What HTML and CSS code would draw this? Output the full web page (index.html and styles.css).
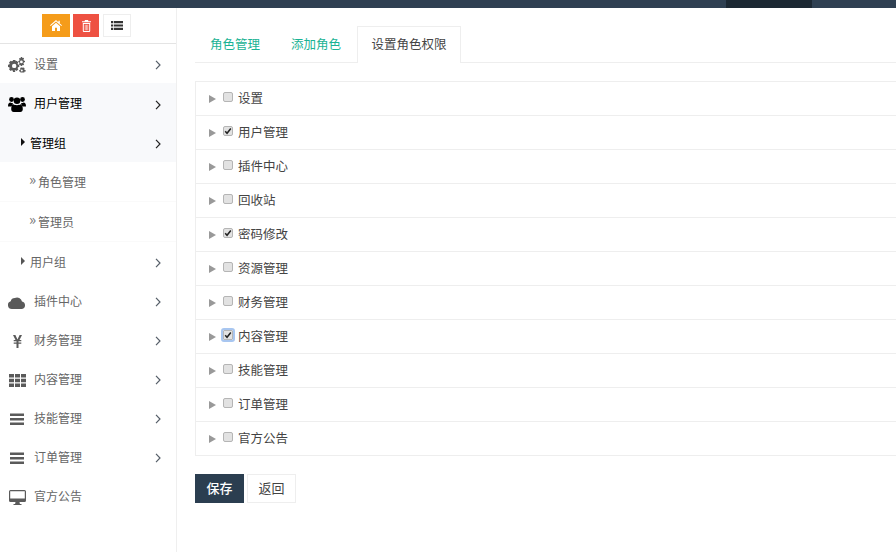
FILE: index.html
```html
<!DOCTYPE html>
<html lang="zh-CN">
<head>
<meta charset="utf-8">
<title>设置角色权限</title>
<link rel="stylesheet" href="styles.css">
</head>
<body>
<svg class="defs" width="0" height="0" aria-hidden="true">
  <symbol id="chev" viewBox="0 0 6 10"><path d="M1 .8 5 5 1 9.2" fill="none" stroke="currentColor" stroke-width="1.2"/></symbol>
  <symbol id="bars" viewBox="0 0 16 16"><path d="M1 2.500h14v2.400H1zM1 7h14v2.400H1zM1 11.500h14v2.400H1z" fill="currentColor"/></symbol>
</svg>
<header class="topbar"><div class="topbar-active"></div></header>
<div class="layout">
  <aside class="sidebar">
    <div class="toolbar">
      <a class="tool tool-home"><svg width="12" height="11" viewBox="0 0 12 11"><path d="M6 0 0 5.300l.7.700L6 1.400 11.300 6l.7-.7L9.800 3.400V.8H8.400v1.400zM2 6.300V11h3V7.700h2V11h3V6.300L6 2.800z" fill="#fff"/></svg></a>
      <a class="tool tool-trash"><svg width="9" height="12" viewBox="0 0 9 12"><path fill="#fff" fill-rule="evenodd" d="M3 0h3l.5 1.300H9v1H0v-1h2.500zM.8 3h7.400v8a1 1 0 0 1-1 1H1.800a1 1 0 0 1-1-1zm1 .9V11h5.400V3.900z"/><path fill="#fbd0cb" d="M2.800 4.800h.8v5.400h-.8zM4.100 4.800h.8v5.400h-.8zM5.400 4.800h.8v5.400h-.8z"/></svg></a>
      <a class="tool tool-list"><svg width="12" height="9" viewBox="0 0 12 9"><path d="M0 0h2.300v2.200H0zM3 0h9v2.200H3zM0 3.400h2.300v2.200H0zM3 3.400h9v2.200H3zM0 6.800h2.300V9H0zM3 6.800h9V9H3z" fill="#333"/></svg></a>
    </div>
    <nav class="menu">
      <a class="item"><span class="ico"><svg width="18" height="16" viewBox="0 0 18 16"><path fill="currentColor" fill-rule="evenodd" d="M5 3h2.400l.3 1.300 1-.5L10.400 5.500l-.8.900.4 1 1.300.3V10l-1.300.3-.4 1 .8.900-1.700 1.700-1-.7-1 .4L7.400 15H5l-.3-1.400-1-.4-1 .7L1 12.200l.7-.9-.4-1L0 10V7.700l1.300-.3.400-1-.7-.9 1.700-1.700 1 .5 1-.4zM6.200 6.700a2.200 2.200 0 1 0 0 4.400 2.200 2.200 0 0 0 0-4.400z"/><path fill="currentColor" fill-rule="evenodd" d="M14 0l.5 1 1-.200.6 1-.7.800.4 1 1.200.3v1.200l-1.200.3-.4 1 .7.800-.6 1-1-.2-.5 1h-1.200l-.4-1-1-.1-.4-.900.600-.800-.4-1-.9-.3V4l1-.2.300-1-.6-.9.500-.900 1 .2.400-1.200zM13.400 3.500a1.400 1.400 0 1 0 0 2.800 1.400 1.400 0 0 0 0-2.800z"/><path fill="currentColor" fill-rule="evenodd" d="M14 10.500l1 .3.900-.3.700.900-.4.900.6.800.9.200v1.100l-1 .2-.5.900H12.500l-.4-.9-1-.2v-1.100l.9-.2.500-.800-.4-.900.700-.900zM13.800 12.500a1 1 0 1 0 0 2 1 1 0 0 0 0-2z"/></svg></span><span class="label">设置</span><svg class="chev"><use href="#chev"/></svg></a>
      <a class="item open"><span class="ico"><svg width="18" height="15" viewBox="0 0 18 15"><g fill="currentColor"><circle cx="3.500" cy="2.500" r="2.400"/><circle cx="14.500" cy="2.500" r="2.400"/><circle cx="9" cy="3.800" r="3.300"/><path d="M0 9.500C0 6.500.8 5.500 2.500 5.500c.8.500 1.500.6 2.400.4-.3.800-.4 1.500-.4 2.400-.6.400-1 .7-1.300 1.200zM18 9.500c0-3-.8-4-2.500-4-.8.500-1.500.6-2.400.4.300.8.400 1.500.4 2.400.6.400 1 .7 1.300 1.200zM5.500 7.300c1.200 1.200 5.800 1.200 7 0 1.700.3 2.300 2.400 2.300 5 0 1.600-1 2.700-2.500 2.700H5.700c-1.500 0-2.500-1.100-2.500-2.700 0-2.600.6-4.700 2.300-5z"/></g></svg></span><span class="label">用户管理</span><svg class="chev"><use href="#chev"/></svg></a>
      <a class="sub open"><i class="caret"></i><span>管理组</span><svg class="chev"><use href="#chev"/></svg></a>
      <a class="leaf"><span class="dbl">»</span><span>角色管理</span></a>
      <a class="leaf"><span class="dbl">»</span><span>管理员</span></a>
      <a class="sub"><i class="caret"></i><span>用户组</span><svg class="chev"><use href="#chev"/></svg></a>
      <a class="item"><span class="ico"><svg width="18" height="13" viewBox="0 0 18 13"><path fill="currentColor" d="M4 13a4 4 0 0 1-1.300-7.800A4.300 4.300 0 0 1 6.800 2 5 5 0 0 1 14 5.400 3.900 3.900 0 0 1 14 13z"/></svg></span><span class="label">插件中心</span><svg class="chev"><use href="#chev"/></svg></a>
      <a class="item"><span class="ico"><svg width="9" height="13" viewBox="0 0 9 13"><path fill="currentColor" d="M0 0h2.400l2.100 4.500L6.600 0H9L6.500 5H8.300v1.300H5.500v1.100h2.800v1.300H5.500V13h-2V8.700H.7V7.400h2.800V6.300H.7V5h1.800z"/></svg></span><span class="label">财务管理</span><svg class="chev"><use href="#chev"/></svg></a>
      <a class="item"><span class="ico"><svg width="17" height="13" viewBox="0 0 17 13"><path fill="currentColor" d="M0 0h5v3.600H0zM6 0h5v3.600H6zM12 0h5v3.600h-5zM0 4.700h5v3.600H0zM6 4.700h5v3.600H6zM12 4.700h5v3.600h-5zM0 9.400h5V13H0zM6 9.400h5V13H6zM12 9.400h5V13h-5z"/></svg></span><span class="label">内容管理</span><svg class="chev"><use href="#chev"/></svg></a>
      <a class="item"><span class="ico"><svg class="bars"><use href="#bars"/></svg></span><span class="label">技能管理</span><svg class="chev"><use href="#chev"/></svg></a>
      <a class="item"><span class="ico"><svg class="bars"><use href="#bars"/></svg></span><span class="label">订单管理</span><svg class="chev"><use href="#chev"/></svg></a>
      <a class="item"><span class="ico"><svg width="17" height="15" viewBox="0 0 17 15"><path fill="currentColor" fill-rule="evenodd" d="M1.500 0h14A1.500 1.500 0 0 1 17 1.500v9a1.500 1.500 0 0 1-1.500 1.500H10.500l.4 2H12.500v1H4.500v-1h1.600l.4-2h-5A1.500 1.500 0 0 1 0 10.500v-9A1.500 1.500 0 0 1 1.500 0zM1.200 1.200v7.300h14.600V1.200z"/></svg></span><span class="label">官方公告</span></a>
    </nav>
  </aside>
  <main class="main">
    <ul class="tabs">
      <li class="tab">角色管理</li>
      <li class="tab">添加角色</li>
      <li class="tab active">设置角色权限</li>
    </ul>
    <ul class="tree">
      <li class="node"><i class="arrow"></i><span class="check"></span><span>设置</span></li>
      <li class="node"><i class="arrow"></i><span class="check on"><svg viewBox="0 0 10 10"><path d="M1.500 5.200 3.800 7.800 8.500 1.800" fill="none" stroke="#222" stroke-width="1.900"/></svg></span><span>用户管理</span></li>
      <li class="node"><i class="arrow"></i><span class="check"></span><span>插件中心</span></li>
      <li class="node"><i class="arrow"></i><span class="check"></span><span>回收站</span></li>
      <li class="node"><i class="arrow"></i><span class="check on"><svg viewBox="0 0 10 10"><path d="M1.500 5.200 3.800 7.800 8.500 1.800" fill="none" stroke="#222" stroke-width="1.900"/></svg></span><span>密码修改</span></li>
      <li class="node"><i class="arrow"></i><span class="check"></span><span>资源管理</span></li>
      <li class="node"><i class="arrow"></i><span class="check"></span><span>财务管理</span></li>
      <li class="node"><i class="arrow"></i><span class="check on focus"><svg viewBox="0 0 10 10"><path d="M1.500 5.200 3.800 7.800 8.500 1.800" fill="none" stroke="#222" stroke-width="1.900"/></svg></span><span>内容管理</span></li>
      <li class="node"><i class="arrow"></i><span class="check"></span><span>技能管理</span></li>
      <li class="node"><i class="arrow"></i><span class="check"></span><span>订单管理</span></li>
      <li class="node"><i class="arrow"></i><span class="check"></span><span>官方公告</span></li>
    </ul>
    <div class="actions">
      <button class="btn btn-primary">保存</button>
      <button class="btn">返回</button>
    </div>
  </main>
</div>
</body>
</html>
```
FILE: styles.css
```css
* { box-sizing: border-box; }
html, body { margin: 0; height: 100%; overflow: hidden; }
body {
  background: #fff;
  color: #333;
  font-family: "Noto Sans CJK SC", "Liberation Sans", sans-serif;
  font-size: 13px;
  display: flex;
  flex-direction: column;
}
.defs { position: absolute; }
ul { list-style: none; margin: 0; padding: 0; }

.topbar { height: 8px; flex: none; background: #2f4052; padding-left: 726px; }
.topbar-active { width: 86px; height: 8px; background: #1c2833; }

.layout { flex: 1; display: flex; min-height: 0; }

.sidebar { width: 177px; flex: none; border-right: 1px solid #efefef; }
.toolbar {
  height: 36px;
  border-bottom: 1px solid #e4e4e4;
  padding: 6px 0 0 42px;
  display: flex;
  align-items: flex-start;
  gap: 3px;
}
.tool { height: 23px; display: flex; align-items: center; justify-content: center; }
.tool-home { width: 28px; background: #f59c1a; }
.tool-trash { width: 26px; background: #ee5142; }
.tool-list { width: 28px; margin-left: 1px; background: #fff; border: 1px solid #eee; }

.item, .sub, .leaf { display: flex; align-items: center; font-size: 12px; color: #666; padding-bottom: 1px; }
.item { height: 39px; padding-left: 8px; }
.item .label { margin-left: 8px; }
.ico { width: 18px; margin-top: 4px; display: flex; justify-content: center; align-items: center; color: #5a5a5a; }
.bars { width: 16px; height: 16px; }
.chev { width: 6px; height: 10px; margin: 4px 15px 0 auto; color: #555e68; }
.item.open { height: 40px; }
.item.open, .sub.open { background: #f8f9fb; color: #000; }
.item.open .ico { color: #000; }
.item.open .chev, .sub.open .chev { color: #222; }

.sub { height: 39px; padding-left: 21px; }
.caret {
  width: 0; height: 0; margin-right: 5px;
  border-left: 4px solid #555;
  border-top: 4px solid transparent;
  border-bottom: 4px solid transparent;
}
.sub.open .caret { border-left-color: #111; }
.leaf { height: 40px; padding-left: 29px; border-bottom: 1px solid #fafafa; }
.dbl { width: 9px; font-size: 15px; line-height: 10px; margin-top: -4px; color: #777; }

.main { flex: 1; min-width: 0; padding: 18px 0 0 18px; }

.tabs { display: flex; height: 37px; border-bottom: 1px solid #eee; gap: 1px; font-size: 12.5px; }
.tab {
  height: 37px;
  padding: 0 14px;
  line-height: 34px;
  color: #1ab394;
  border: 1px solid transparent;
  border-bottom: none;
}
.tab.active { color: #444; background: #fff; border-color: #eee; padding: 0 13.5px; }

.tree { margin-top: 18px; border: 1px solid #eee; border-right: none; font-size: 12.5px; }
.node {
  height: 34px;
  display: flex;
  align-items: center;
  padding: 0 0 3px 13px;
  border-bottom: 1px solid #eee;
  color: #444;
}
.node:last-child { border-bottom: none; height: 33px; }
.arrow {
  width: 0; height: 0; margin: 3px 7px 0 0;
  border-left: 7px solid #999;
  border-top: 4px solid transparent;
  border-bottom: 4px solid transparent;
}
.check {
  width: 10px; height: 10px; margin: 0 5px 0 0;
  background: #e2e2e2;
  border: 1px solid #b5b5b5;
  border-radius: 2px;
  display: flex;
}
.check svg { width: 100%; height: 100%; }
.check.focus { outline: 2px solid #a8c6f0; outline-offset: 0; border-radius: 1px; }

.actions { margin-top: 18px; display: flex; gap: 3px; }
.btn {
  width: 49px;
  height: 29px;
  padding: 0 0 3px;
  font: inherit;
  color: #444;
  background: #fff;
  border: 1px solid #eee;
}
.btn-primary { background: #2b3e50; border-color: #2b3e50; color: #fff; font-weight: 500; }
```
